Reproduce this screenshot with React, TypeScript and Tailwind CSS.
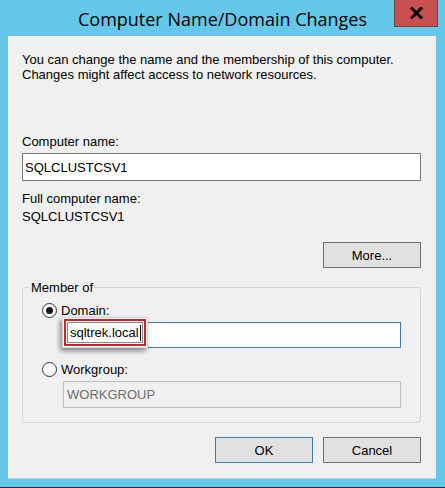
function Radio({ checked }: { checked?: boolean }) {
  return (
    <span className="w-[15px] h-[15px] rounded-full border border-[#333333] bg-white flex items-center justify-center shrink-0">
      {checked && <span className="w-[7px] h-[7px] rounded-full bg-[#1a1a1a]" />}
    </span>
  );
}

function WinButton({ label, primary }: { label: string; primary?: boolean }) {
  return (
    <button
      className={
        primary
          ? "w-[98px] h-[26px] bg-[#e1e1e1] border border-[#3c7fb1] text-black"
          : "w-[98px] h-[26px] bg-[#e1e1e1] border border-[#707070] text-black"
      }
    >
      {label}
    </button>
  );
}

export default function App() {
  return (
    <div className="w-[445px] h-[488px] bg-[#63c8ea] flex flex-col border-b border-[#1e2f3a] font-['Liberation_Sans',Arial,sans-serif] text-[13px] leading-[15px] text-black">
      {/* title bar */}
      <div className="h-[36px] shrink-0 grid grid-cols-[1fr_auto_1fr] items-start">
        <div />
        <div className="pt-[7px] font-['Open_Sans','Noto_Sans',sans-serif] text-[18px] leading-[24px] text-black whitespace-nowrap">
          Computer Name/Domain Changes
        </div>
        <div className="flex justify-end pr-[7px]">
          <button className="w-[44px] h-[27px] bg-[#c75050] border border-t-0 border-[#7d3a33] flex items-center justify-center">
            <svg width="13" height="12" viewBox="0 0 13 12">
              <path d="M2 1.5 L11 10.5 M11 1.5 L2 10.5" stroke="#000" strokeWidth="3" strokeLinecap="square" />
            </svg>
          </button>
        </div>
      </div>

      {/* client area */}
      <div className="ml-[8px] mr-[9px] h-[443px] shrink-0 bg-[#f0f0f0] border-b border-[#c9c9c9] pl-[14px] pr-[15px] pt-[16px] flex flex-col">
        <p>
          You can change the name and the membership of this computer.
          <br />
          Changes might affect access to network resources.
        </p>

        <div className="mt-[52px]">Computer name:</div>
        <div className="mt-[4px] h-[28px] border border-[#7a7a7a] bg-white pl-[2px] flex items-center">
          SQLCLUSTCSV1
        </div>

        <div className="mt-[10px]">Full computer name:</div>
        <div className="mt-[3px]">SQLCLUSTCSV1</div>

        <div className="mt-[18px] flex justify-end">
          <WinButton label="More..." />
        </div>

        <fieldset className="mt-[12px] border border-[#d5d5d5] rounded-[3px] pb-[14px]">
          <legend className="ml-[6px] px-[2px]">Member of</legend>

          <div className="mt-[8px] ml-[19px] flex items-center gap-[4px]">
            <Radio checked />
            <span>Domain:</span>
          </div>
          <div className="relative mt-[4px] ml-[40px] mr-[19px] h-[26px] border border-[#3c7fb1] bg-white">
            <div className="absolute left-[-2px] top-[-6px] w-[86px] h-[31px] bg-white border border-[#d8d8d8] shadow-[-2px_3px_5px_rgba(0,0,0,0.45)] p-[1px]">
              <div className="w-full h-full border-2 border-[#d4202a] p-[1px]">
                <div className="w-full h-full border border-[#8a8a8a] bg-white flex items-center pl-[2px]">
                  <span>sqltrek.local</span>
                  <span className="ml-[1px] w-[1px] h-[16px] bg-black" />
                </div>
              </div>
            </div>
          </div>

          <div className="mt-[14px] ml-[19px] flex items-center gap-[4px]">
            <Radio />
            <span>Workgroup:</span>
          </div>
          <div className="mt-[4px] ml-[40px] mr-[19px] h-[27px] border border-[#bfbfbf] bg-[#f0f0f0] pl-[3px] flex items-center text-[#6d6d6d]">
            WORKGROUP
          </div>
        </fieldset>

        <div className="mt-[14px] flex justify-end gap-[10px]">
          <WinButton label="OK" primary />
          <WinButton label="Cancel" />
        </div>
      </div>
    </div>
  );
}
